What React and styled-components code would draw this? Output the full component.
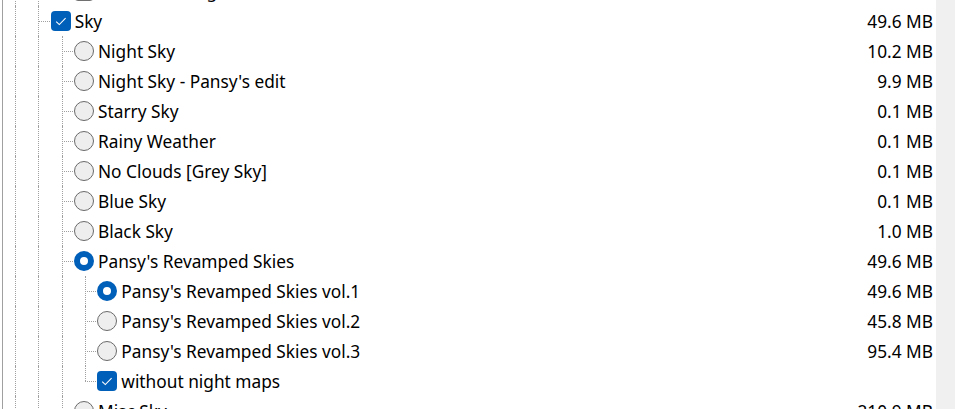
import React from "react";
import styled, { createGlobalStyle } from "styled-components";

const rows = [
  { guides: 2, last: true, kind: "check", checked: false, label: "Extra Shooting Stars", size: "" },
  { guides: 1, kind: "check", checked: true, label: "Sky", size: "49.6 MB" },
  { guides: 2, kind: "radio", label: "Night Sky", size: "10.2 MB" },
  { guides: 2, kind: "radio", label: "Night Sky - Pansy's edit", size: "9.9 MB" },
  { guides: 2, kind: "radio", label: "Starry Sky", size: "0.1 MB" },
  { guides: 2, kind: "radio", label: "Rainy Weather", size: "0.1 MB" },
  { guides: 2, kind: "radio", label: "No Clouds [Grey Sky]", size: "0.1 MB" },
  { guides: 2, kind: "radio", label: "Blue Sky", size: "0.1 MB" },
  { guides: 2, kind: "radio", label: "Black Sky", size: "1.0 MB" },
  { guides: 2, kind: "radio", checked: true, label: "Pansy's Revamped Skies", size: "49.6 MB" },
  { guides: 3, kind: "radio", checked: true, label: "Pansy's Revamped Skies vol.1", size: "49.6 MB" },
  { guides: 3, kind: "radio", label: "Pansy's Revamped Skies vol.2", size: "45.8 MB" },
  { guides: 3, kind: "radio", label: "Pansy's Revamped Skies vol.3", size: "95.4 MB" },
  { guides: 3, last: true, kind: "check", checked: true, label: "without night maps", size: "" },
  { guides: 2, kind: "radio", label: "Misc Sky", size: "210.9 MB" },
];

function CheckIcon() {
  return (
    <svg width="20" height="20" viewBox="0 0 20 20">
      <path d="M5.2 10.6 L8.3 13.6 L14.6 7.2" fill="none" stroke="#fff" strokeWidth="1.1" />
    </svg>
  );
}

function App() {
  return (
    <>
      <GlobalStyle />
      <Frame>
        <Tree>
          <List>
            {rows.map((r, i) => (
              <Row key={i}>
                {Array.from({ length: r.guides }).map((_, g) => (
                  <Guide key={g} />
                ))}
                <Branch $last={r.last} />
                {r.kind === "check" ? (
                  <CheckBox $checked={r.checked}>{r.checked && <CheckIcon />}</CheckBox>
                ) : (
                  <Radio $checked={r.checked} />
                )}
                <Label>{r.label}</Label>
                <Size>{r.size}</Size>
              </Row>
            ))}
          </List>
        </Tree>
        <ScrollTrack />
      </Frame>
    </>
  );
}

export default App;

const GlobalStyle = createGlobalStyle`
  html, body {
    margin: 0;
    padding: 0;
    background: #ffffff;
  }
  body {
    font-family: "Noto Sans", "Open Sans", sans-serif;
  }
`;

const Frame = styled.div`
  display: flex;
  width: 955px;
  height: 409px;
  padding-left: 2px;
  box-sizing: border-box;
  overflow: hidden;
`;

const Tree = styled.div`
  flex: 1;
  border-left: 1px solid #a0a0a0;
  overflow: hidden;
  background: #ffffff;
`;

const List = styled.div`
  display: flex;
  flex-direction: column;
  margin-top: -24px;
`;

const Row = styled.div`
  display: flex;
  align-items: center;
  height: 30px;
  flex-shrink: 0;
`;

const Guide = styled.div`
  position: relative;
  width: 23.33px;
  height: 100%;
  flex-shrink: 0;

  &::before {
    content: "";
    position: absolute;
    left: 12px;
    top: 0;
    bottom: 0;
    border-left: 1px dotted #a0a0a0;
  }
`;

const Branch = styled(Guide)`
  &::before {
    bottom: ${(p) => (p.$last ? "50%" : "0")};
  }
  &::after {
    content: "";
    position: absolute;
    left: 12px;
    right: 0;
    top: 50%;
    border-top: 1px dotted #a0a0a0;
  }
`;

const CheckBox = styled.div`
  width: 20px;
  height: 20px;
  margin-left: 1px;
  box-sizing: border-box;
  border-radius: 4px;
  flex-shrink: 0;
  display: flex;
  align-items: center;
  justify-content: center;
  background: ${(p) => (p.$checked ? "#005fb8" : "#f3f3f3")};
  border: ${(p) => (p.$checked ? "none" : "1.5px solid #707070")};
`;

const Radio = styled.div`
  width: 20px;
  height: 20px;
  margin-left: 1px;
  box-sizing: border-box;
  border-radius: 50%;
  flex-shrink: 0;
  background: ${(p) => (p.$checked ? "#ffffff" : "#eeeeee")};
  border: ${(p) => (p.$checked ? "6px solid #005fb8" : "1.5px solid #6a6a6a")};
`;

const Label = styled.span`
  margin-left: 4px;
  font-size: 17.3px;
  color: #000000;
  white-space: nowrap;
`;

const Size = styled.span`
  margin-left: auto;
  padding-right: 3px;
  font-size: 17.3px;
  color: #000000;
  white-space: nowrap;
`;

const ScrollTrack = styled.div`
  width: 19px;
  flex-shrink: 0;
  background: #f0f0f0;
`;
